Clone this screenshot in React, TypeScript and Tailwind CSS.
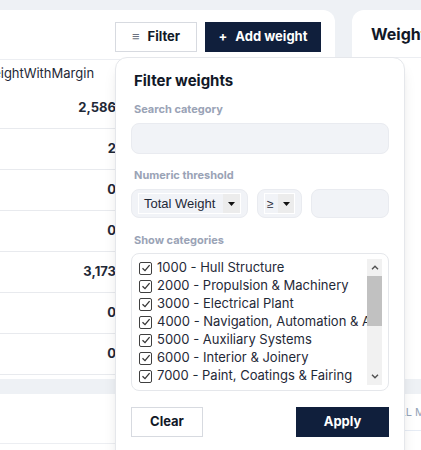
import { useState } from "react"

const rows = ["2,586", "2", "0", "0", "3,173", "0", "0"]

const categories = [
  "1000 - Hull Structure",
  "2000 - Propulsion & Machinery",
  "3000 - Electrical Plant",
  "4000 - Navigation, Automation & Alarm",
  "5000 - Auxiliary Systems",
  "6000 - Interior & Joinery",
  "7000 - Paint, Coatings & Fairing",
  "8000 - Deck Equipment",
]

function CheckBox() {
  return (
    <span className="flex h-[13px] w-[13px] shrink-0 items-center justify-center rounded-[2px] border border-[#3f3f3f] bg-white">
      <svg width="10" height="10" viewBox="0 0 10 10" fill="none">
        <path d="M1.5 5.2 L4 7.6 L8.6 2.2" stroke="#333" strokeWidth="1.3" />
      </svg>
    </span>
  )
}

function Caret() {
  return (
    <svg width="7" height="4" viewBox="0 0 7 4">
      <path d="M0 0 H7 L3.5 4 Z" fill="#111" />
    </svg>
  )
}

export default function App() {
  const [checked] = useState(categories.map(() => true))

  return (
    <div className="relative h-[450px] w-[421px] overflow-hidden bg-[#eef1f5] font-['Inter',sans-serif] text-[#111827]">
      <div className="ml-[-31px] flex flex-col gap-[15px] pt-[10px]">
        {/* top row */}
        <div className="flex gap-[17px]">
          <div className="h-[369px] w-[366px] shrink-0 overflow-hidden rounded-xl bg-white">
            <div className="flex h-[50px] items-start justify-end gap-2 border-b border-[#eceef2] pr-[14px] pt-[12px]">
              <button className="flex h-[30px] w-[82px] items-center justify-center gap-2 border border-[#d7dae0] bg-white text-[13px] font-bold text-[#111827]">
                <span className="font-normal text-[#6b7280]">≡</span>
                Filter
              </button>
              <button className="flex h-[30px] w-[116px] items-center justify-center gap-2 bg-[#101f3c] text-[13px] font-bold text-white">
                <span>+</span>
                Add weight
              </button>
            </div>
            <div className="flex h-[28px] items-center px-3 text-[13px] text-[#1f2937]">
              WeightWithMargin
            </div>
            {rows.map((v, i) => (
              <div key={i} className="flex h-[41px] items-center border-b border-[#e8eaee]">
                <div className="w-[159px] pr-3 text-right text-[13px] font-bold text-[#1f2937]">{v}</div>
              </div>
            ))}
          </div>
          <div className="h-[369px] w-[200px] shrink-0 rounded-xl bg-white">
            <div className="flex h-[48px] items-center whitespace-nowrap border-b border-[#eceef2] pl-[19px] pt-[1px] text-[16px] font-bold text-[#111827]">
              Weight summary
            </div>
          </div>
        </div>
        {/* bottom row */}
        <div className="flex gap-[17px]">
          <div className="h-[80px] w-[366px] shrink-0 rounded-xl bg-white">
            <div className="h-[50px] border-b border-[#eceef2]" />
          </div>
          <div className="h-[80px] w-[200px] shrink-0 rounded-xl bg-white">
            <div className="flex h-[37px] items-center border-b border-[#e6ecf5] pl-[40px] text-[11px] text-[#94a3b8]">
              ALL MODULES
            </div>
          </div>
        </div>
      </div>

      {/* filter popover */}
      <div className="absolute left-[115px] top-[57px] h-[410px] w-[290px] rounded-xl border border-[#e5e7eb] bg-white px-[15px] pt-[13px] shadow-lg">
        <div className="pl-[3px] text-[15px] font-bold leading-5 text-[#111827]">Filter weights</div>

        <div className="mt-[10px] pl-[3px] text-[11px] font-bold leading-4 text-[#9aa3b6]">Search category</div>
        <div className="mt-[6px] h-[31px] w-full rounded-lg border border-[#e9ebf0] bg-[#f1f3f7]" />

        <div className="mt-[13px] pl-[3px] text-[11px] font-bold leading-4 text-[#9aa3b6]">Numeric threshold</div>
        <div className="mt-[6px] flex h-[29px] gap-[9px]">
          <div className="flex w-[117px] items-center rounded-lg border border-[#e9ebf0] bg-[#f1f3f7] px-[6px]">
            <div className="flex h-[21px] w-full items-stretch border border-white font-['Liberation_Sans',sans-serif] text-[13px] text-[#1f2937]">
              <span className="flex flex-1 items-center pl-[5px]">Total Weight</span>
              <span className="flex w-[17px] items-center justify-center bg-[#ececec]">
                <Caret />
              </span>
            </div>
          </div>
          <div className="flex w-[45px] items-center rounded-lg border border-[#e9ebf0] bg-[#f1f3f7] px-[6px]">
            <div className="flex h-[21px] w-full items-stretch border border-white font-['Liberation_Sans',sans-serif] text-[12px] text-[#1f2937]">
              <span className="flex flex-1 items-center pl-[2px]">≥</span>
              <span className="flex w-[16px] items-center justify-center bg-[#ececec]">
                <Caret />
              </span>
            </div>
          </div>
          <div className="flex-1 rounded-lg border border-[#e9ebf0] bg-[#f1f3f7]" />
        </div>

        <div className="mt-[14px] pl-[3px] text-[11px] font-bold leading-4 text-[#9aa3b6]">Show categories</div>
        <div className="mt-[5px] flex h-[138px] rounded-lg border border-[#e5e7eb] bg-white py-[5px] pl-[7px] pr-[6px]">
          <div className="flex-1 overflow-hidden">
            {categories.map((c, i) => (
              <label key={c} className="flex h-[18px] items-center gap-[5px] whitespace-nowrap text-[13px] text-[#1f2937]">
                {checked[i] && <CheckBox />}
                <span>{c}</span>
              </label>
            ))}
          </div>
          <div className="flex w-[15px] shrink-0 flex-col bg-[#f1f1f1]">
            <div className="flex h-[17px] items-center justify-center">
              <svg width="8" height="5" viewBox="0 0 8 5" fill="none">
                <path d="M1 4.3 L4 1.3 L7 4.3" stroke="#505050" strokeWidth="1.4" />
              </svg>
            </div>
            <div className="h-[50px] bg-[#c1c1c1]" />
            <div className="flex-1" />
            <div className="flex h-[17px] items-center justify-center">
              <svg width="8" height="5" viewBox="0 0 8 5" fill="none">
                <path d="M1 0.7 L4 3.7 L7 0.7" stroke="#505050" strokeWidth="1.4" />
              </svg>
            </div>
          </div>
        </div>

        <div className="mt-[16px] flex justify-between">
          <button className="h-[30px] w-[72px] border border-[#d7dae0] bg-white text-[13px] font-bold text-[#111827]">
            Clear
          </button>
          <button className="h-[30px] w-[93px] bg-[#101f3c] text-[13px] font-bold text-white">Apply</button>
        </div>
      </div>
    </div>
  )
}
